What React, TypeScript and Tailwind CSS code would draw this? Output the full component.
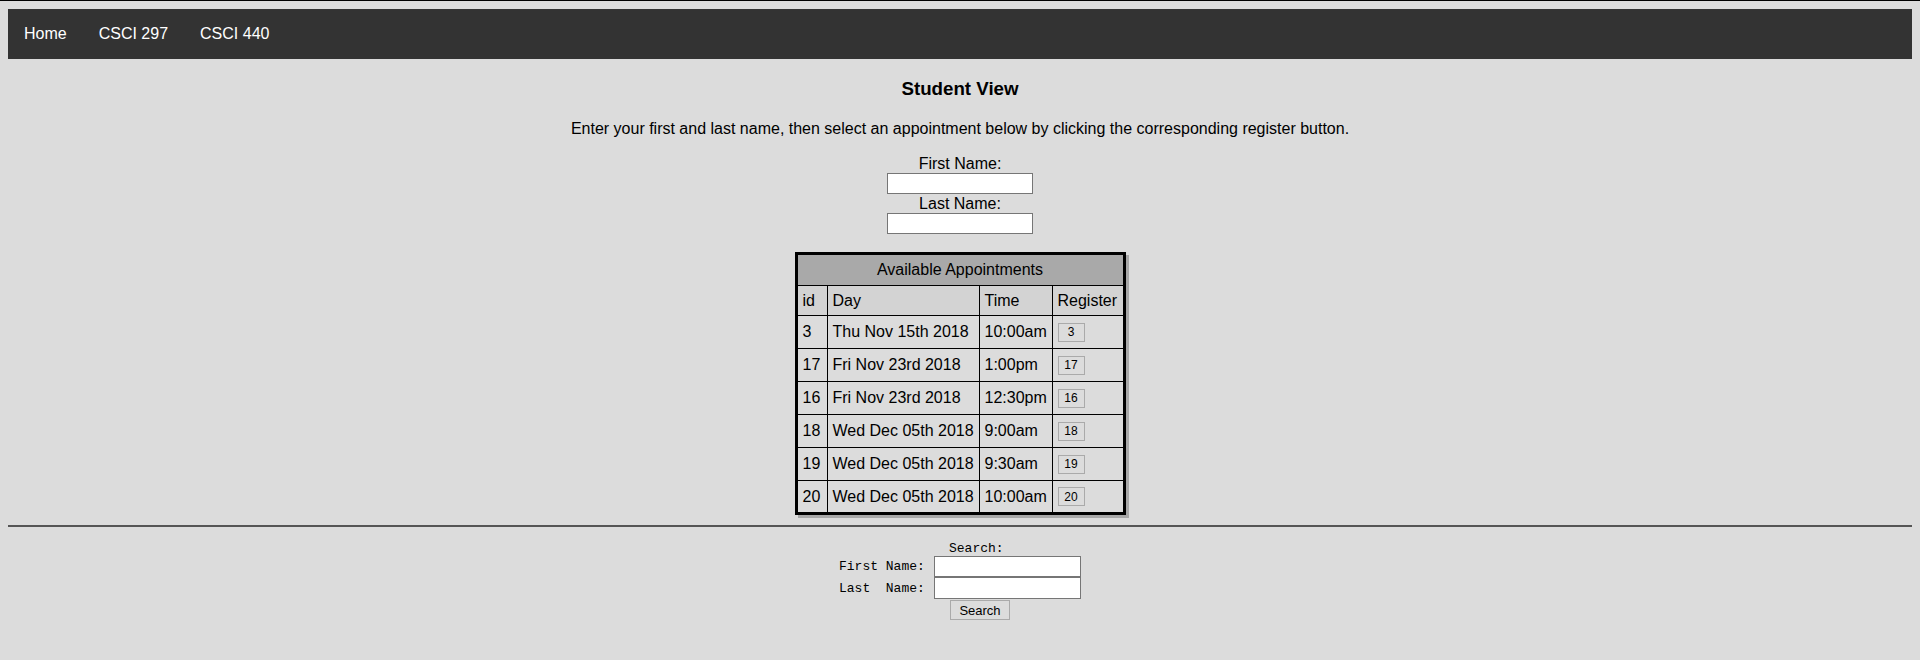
import React from 'react';

const appointments = [
  { id: 3, day: 'Thu Nov 15th 2018', time: '10:00am' },
  { id: 17, day: 'Fri Nov 23rd 2018', time: '1:00pm' },
  { id: 16, day: 'Fri Nov 23rd 2018', time: '12:30pm' },
  { id: 18, day: 'Wed Dec 05th 2018', time: '9:00am' },
  { id: 19, day: 'Wed Dec 05th 2018', time: '9:30am' },
  { id: 20, day: 'Wed Dec 05th 2018', time: '10:00am' },
];

const navLinks = ['Home', 'CSCI 297', 'CSCI 440'];

const App = () => {
  return (
    <div className="min-h-[660px] bg-[#dcdcdc] border-t border-black px-2 pt-2 font-['Liberation_Sans',Arial,sans-serif] text-black">
      {/* Top nav */}
      <nav className="flex h-[50px] items-center bg-[#333333]">
        {navLinks.map(link => (
          <a key={link} href="#" className="px-4 text-[16px] text-white">
            {link}
          </a>
        ))}
      </nav>

      <div className="flex flex-col items-center">
        <h3 className="mt-[19px] text-[18.72px] font-bold leading-[21px]">Student View</h3>
        <p className="mt-[21px] text-[16px] leading-[18px]">
          Enter your first and last name, then select an appointment below by clicking the corresponding register button.
        </p>

        {/* Name form */}
        <div className="mt-[17px] flex flex-col items-center text-[16px] leading-[18px]">
          <label>First Name:</label>
          <input type="text" className="h-[21px] w-[146px] border border-[#767676] bg-white" />
          <label className="mt-px">Last Name:</label>
          <input type="text" className="h-[21px] w-[146px] border border-[#767676] bg-white" />
        </div>

        {/* Appointments */}
        <table className="mt-[18px] table-fixed border-collapse border-[3px] border-black text-[16px] leading-[18px] shadow-[3px_3px_0_#a8a8a8]">
          <colgroup>
            <col className="w-[31px]" />
            <col className="w-[152px]" />
            <col className="w-[73px]" />
            <col className="w-[72px]" />
          </colgroup>
          <thead>
            <tr className="bg-[#a9a9a9]">
              <th colSpan={4} className="h-[32px] border border-black text-center font-normal">
                Available Appointments
              </th>
            </tr>
            <tr className="bg-[#d3d3d3]">
              <th className="h-[30px] border border-black pl-[5px] text-left font-normal">id</th>
              <th className="border border-black pl-[5px] text-left font-normal">Day</th>
              <th className="border border-black pl-[5px] text-left font-normal">Time</th>
              <th className="border border-black pl-[5px] text-left font-normal">Register</th>
            </tr>
          </thead>
          <tbody>
            {appointments.map(a => (
              <tr key={a.id}>
                <td className="h-[33px] border border-black pl-[5px]">{a.id}</td>
                <td className="border border-black pl-[5px] whitespace-nowrap">{a.day}</td>
                <td className="border border-black pl-[5px] whitespace-nowrap">{a.time}</td>
                <td className="border border-black pl-[5px]">
                  <button className="flex h-[19px] w-[27px] items-center justify-center border border-[#aaaaaa] bg-[#dcdcdc] text-[12px]">
                    {a.id}
                  </button>
                </td>
              </tr>
            ))}
          </tbody>
        </table>
      </div>

      <div className="mt-[10px] h-[2px] bg-[#555555]" />

      {/* Search form */}
      <div className="mx-auto mt-[14px] w-[242px] font-['Liberation_Mono','Courier_New',monospace] text-[13px] leading-[15px]">
        <div className="ml-[110px]">Search:</div>
        <div className="grid grid-cols-[86px_147px] items-center gap-x-[9px]">
          <span className="whitespace-pre">First Name:</span>
          <input type="text" className="h-[21px] w-[147px] border border-[#767676] bg-white" />
          <span className="whitespace-pre">Last  Name:</span>
          <input type="text" className="h-[22px] w-[147px] border border-[#767676] bg-white" />
        </div>
        <button className="ml-[111px] mt-px h-[20px] w-[60px] border border-[#aaaaaa] bg-[#dcdcdc] font-['Liberation_Sans',Arial,sans-serif] text-[13px]">
          Search
        </button>
      </div>
    </div>
  );
};

export default App;
